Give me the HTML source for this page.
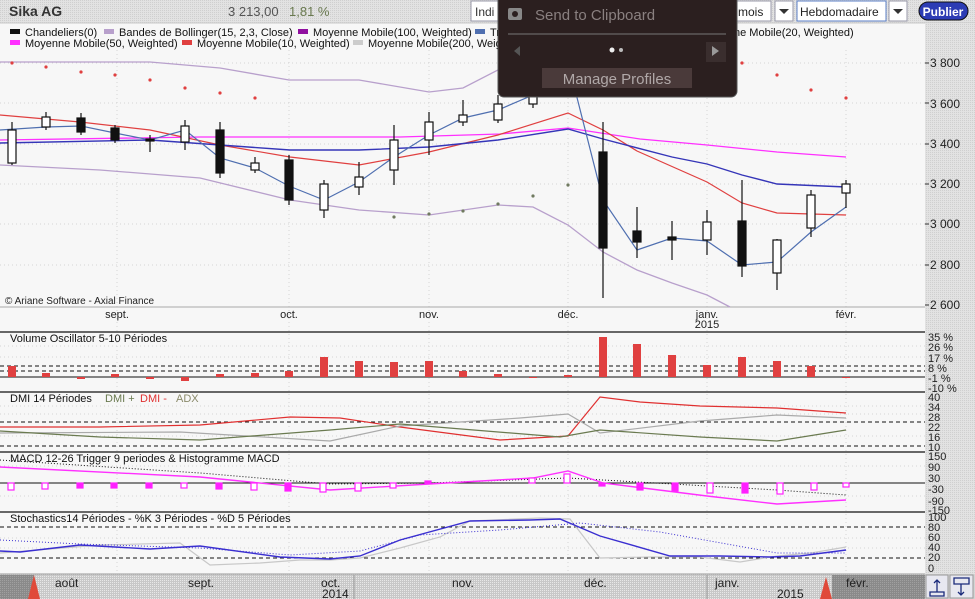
<!DOCTYPE html>
<html><head><meta charset="utf-8"><style>
html,body{margin:0;padding:0;background:#f4f4f4;width:975px;height:599px;overflow:hidden}
svg{display:block;font-family:"Liberation Sans",sans-serif}
</style></head><body>
<svg width="975" height="599" viewBox="0 0 975 599" xmlns="http://www.w3.org/2000/svg">
<defs>
<pattern id="tex" width="2" height="2" patternUnits="userSpaceOnUse"><rect width="2" height="2" fill="#e2e2e2"/><rect width="1" height="1" fill="#cfcfcf"/></pattern>
<pattern id="tex2" width="2" height="2" patternUnits="userSpaceOnUse"><rect width="2" height="2" fill="#c8c8c8"/><rect width="1" height="1" fill="#e8e8e8"/></pattern>
<pattern id="tex3" width="2" height="2" patternUnits="userSpaceOnUse"><rect width="2" height="2" fill="#8a8a8a"/><rect width="1" height="1" fill="#a0a0a0"/></pattern>
</defs>
<rect width="975" height="599" fill="#f7f7f7"/>
<rect x="0" y="0" width="975" height="23" fill="url(#tex)"/>
<line x1="0" y1="23" x2="975" y2="23" stroke="#c8c8c8"/>
<rect x="925" y="23" width="50" height="551" fill="url(#tex)"/>
<g stroke="#d4d4d4" stroke-dasharray="1,3">
<line x1="0" y1="63" x2="925" y2="63"/><line x1="0" y1="103" x2="925" y2="103"/><line x1="0" y1="144" x2="925" y2="144"/><line x1="0" y1="184" x2="925" y2="184"/><line x1="0" y1="224" x2="925" y2="224"/><line x1="0" y1="265" x2="925" y2="265"/>
<line x1="117" y1="50" x2="117" y2="574"/><line x1="289" y1="50" x2="289" y2="574"/><line x1="429" y1="50" x2="429" y2="574"/><line x1="568" y1="50" x2="568" y2="574"/><line x1="707" y1="50" x2="707" y2="574"/><line x1="846" y1="50" x2="846" y2="574"/>
<line x1="0" y1="346" x2="925" y2="346"/><line x1="0" y1="357" x2="925" y2="357"/><line x1="0" y1="406" x2="925" y2="406"/><line x1="0" y1="414" x2="925" y2="414"/><line x1="0" y1="436" x2="925" y2="436"/><line x1="0" y1="466" x2="925" y2="466"/><line x1="0" y1="496" x2="925" y2="496"/><line x1="0" y1="538" x2="925" y2="538"/><line x1="0" y1="548" x2="925" y2="548"/>
</g>
<line x1="0" y1="307" x2="925" y2="307" stroke="#aaa"/>

<text x="9" y="16" font-size="14" font-weight="bold" fill="#333">Sika AG</text>
<text x="228" y="16" font-size="13" fill="#555">3 213,00</text>
<text x="289" y="16" font-size="13" fill="#6a7a50">1,81 %</text>
<rect x="471" y="1" width="30" height="20" fill="#fff" stroke="#99a"/>
<text x="475" y="16" font-size="12" fill="#333">Indi</text>
<rect x="736" y="1" width="35" height="20" fill="#fff" stroke="#99a"/>
<text x="738" y="16" font-size="12" fill="#222">mois</text>
<rect x="775" y="1" width="18" height="20" fill="#fff" stroke="#99a"/><path d="M779 9h10l-5 5z" fill="#333"/>
<rect x="797" y="1" width="89" height="20" fill="#fff" stroke="#5b7fc7"/>
<text x="800" y="16" font-size="12" fill="#222">Hebdomadaire</text>
<rect x="889" y="1" width="18" height="20" fill="#fff" stroke="#99a"/><path d="M893 9h10l-5 5z" fill="#333"/>
<rect x="919" y="2" width="49" height="18" rx="9" fill="#2c3cb4" stroke="#111"/>
<text x="943" y="16" font-size="12" font-weight="bold" fill="#fff" text-anchor="middle">Publier</text>

<g font-size="11" fill="#111">
<rect x="10" y="29" width="10" height="5" fill="#111"/><text x="25" y="36">Chandeliers(0)</text>
<rect x="104" y="29" width="10" height="5" fill="#b8a0cc"/><text x="119" y="36">Bandes de Bollinger(15, 2,3, Close)</text>
<rect x="298" y="29" width="10" height="5" fill="#9010a0"/><text x="313" y="36">Moyenne Mobile(100, Weighted)</text>
<rect x="475" y="29" width="10" height="5" fill="#4f6fb0"/><text x="490" y="36">Tr</text>
<text x="734" y="36">ne Mobile(20, Weighted)</text>
<rect x="10" y="40" width="10" height="5" fill="#ff30ff"/><text x="25" y="47">Moyenne Mobile(50, Weighted)</text>
<rect x="182" y="40" width="10" height="5" fill="#e04040"/><text x="197" y="47">Moyenne Mobile(10, Weighted)</text>
<rect x="353" y="40" width="10" height="5" fill="#cccccc"/><text x="368" y="47">Moyenne Mobile(200, Weig</text>
</g>

<polyline fill="none" stroke="#b8a0cc" stroke-width="1.3" points="0,62 80,62 150,62 220,68 289,80 359,80 429,92 463,88 498,70 520,55"/>
<polyline fill="none" stroke="#b8a0cc" stroke-width="1.3" points="0,165 100,170 200,178 290,200 359,210 429,215 498,205 533,207 568,225 603,252 637,270 672,283 707,295 730,307"/>
<polyline fill="none" stroke="#ff30ff" stroke-width="1.3" points="0,140 200,137 400,137 500,134 568,128 640,139 707,145 777,152 846,157"/>
<polyline fill="none" stroke="#e04040" stroke-width="1.2" points="0,115 80,122 150,130 220,145 290,157 359,165 429,152 498,135 568,113 603,130 637,151 707,182 742,203 777,213 846,215"/>
<polyline fill="none" stroke="#3535b8" stroke-width="1.4" points="0,143 150,140 290,150 359,150 429,147 498,140 568,129 603,139 672,157 707,164 742,175 777,184 846,187"/>
<polyline fill="none" stroke="#4f6fb0" stroke-width="1.2" points="0,130 46,127 81,126 115,133 150,140 185,130 220,158 255,168 289,186 324,200 359,182 394,157 429,135 463,118 498,110 533,95 570,70 603,200 637,250 672,238 707,241 742,265 777,262 811,232 846,207"/>
<g fill="#e04040">
<circle cx="12" cy="63" r="1.6"/><circle cx="46" cy="67" r="1.6"/><circle cx="81" cy="72" r="1.6"/><circle cx="115" cy="75" r="1.6"/><circle cx="150" cy="80" r="1.6"/><circle cx="185" cy="88" r="1.6"/><circle cx="220" cy="93" r="1.6"/><circle cx="255" cy="98" r="1.6"/>
<circle cx="742" cy="63" r="1.6"/><circle cx="777" cy="75" r="1.6"/><circle cx="811" cy="90" r="1.6"/><circle cx="846" cy="98" r="1.6"/>
</g>
<g fill="#707a60"><circle cx="394" cy="217" r="1.6"/><circle cx="429" cy="214" r="1.6"/><circle cx="463" cy="211" r="1.6"/><circle cx="498" cy="204" r="1.6"/><circle cx="533" cy="196" r="1.6"/><circle cx="568" cy="185" r="1.6"/></g>

<g stroke="#111" stroke-width="1.2">
<line x1="12" y1="122" x2="12" y2="165"/><rect x="8" y="130" width="8" height="33" fill="#fff"/>
<line x1="46" y1="112" x2="46" y2="130"/><rect x="42" y="117" width="8" height="10" fill="#fff"/>
<line x1="81" y1="113" x2="81" y2="135"/><rect x="77" y="118" width="8" height="14" fill="#111"/>
<line x1="115" y1="125" x2="115" y2="143"/><rect x="111" y="128" width="8" height="12" fill="#111"/>
<line x1="150" y1="135" x2="150" y2="152"/><rect x="146" y="139" width="8" height="2" fill="#111"/>
<line x1="185" y1="120" x2="185" y2="150"/><rect x="181" y="126" width="8" height="16" fill="#fff"/>
<line x1="220" y1="122" x2="220" y2="178"/><rect x="216" y="130" width="8" height="43" fill="#111"/>
<line x1="255" y1="157" x2="255" y2="173"/><rect x="251" y="163" width="8" height="7" fill="#fff"/>
<line x1="289" y1="155" x2="289" y2="205"/><rect x="285" y="160" width="8" height="40" fill="#111"/>
<line x1="324" y1="180" x2="324" y2="218"/><rect x="320" y="184" width="8" height="26" fill="#fff"/>
<line x1="359" y1="162" x2="359" y2="195"/><rect x="355" y="177" width="8" height="10" fill="#fff"/>
<line x1="394" y1="125" x2="394" y2="185"/><rect x="390" y="140" width="8" height="30" fill="#fff"/>
<line x1="429" y1="112" x2="429" y2="155"/><rect x="425" y="122" width="8" height="18" fill="#fff"/>
<line x1="463" y1="100" x2="463" y2="126"/><rect x="459" y="115" width="8" height="7" fill="#fff"/>
<line x1="498" y1="95" x2="498" y2="123"/><rect x="494" y="104" width="8" height="16" fill="#fff"/>
<line x1="533" y1="85" x2="533" y2="108"/><rect x="529" y="95" width="8" height="9" fill="#fff"/>
<line x1="603" y1="122" x2="603" y2="298"/><rect x="599" y="152" width="8" height="96" fill="#111"/>
<line x1="637" y1="207" x2="637" y2="258"/><rect x="633" y="231" width="8" height="11" fill="#111"/>
<line x1="672" y1="221" x2="672" y2="260"/><rect x="668" y="237" width="8" height="3" fill="#111"/>
<line x1="707" y1="210" x2="707" y2="255"/><rect x="703" y="222" width="8" height="18" fill="#fff"/>
<line x1="742" y1="180" x2="742" y2="277"/><rect x="738" y="221" width="8" height="45" fill="#111"/>
<line x1="777" y1="239" x2="777" y2="290"/><rect x="773" y="240" width="8" height="33" fill="#fff"/>
<line x1="811" y1="190" x2="811" y2="237"/><rect x="807" y="195" width="8" height="33" fill="#fff"/>
<line x1="846" y1="180" x2="846" y2="208"/><rect x="842" y="184" width="8" height="9" fill="#fff"/>
</g>

<text x="5" y="304" font-size="10" fill="#222">© Ariane Software - Axial Finance</text>
<g font-size="11" fill="#222" text-anchor="middle">
<text x="117" y="318">sept.</text><text x="289" y="318">oct.</text><text x="429" y="318">nov.</text><text x="568" y="318">déc.</text><text x="707" y="318">janv.</text><text x="707" y="328">2015</text><text x="846" y="318">févr.</text>
</g>
<g font-size="12" fill="#222"><text x="930" y="67">3 800</text><text x="930" y="108">3 600</text><text x="930" y="148">3 400</text><text x="930" y="188">3 200</text><text x="930" y="228">3 000</text><text x="930" y="269">2 800</text><text x="930" y="309">2 600</text></g>
<g stroke="#333"><line x1="925" y1="63" x2="929" y2="63"/><line x1="925" y1="103" x2="929" y2="103"/><line x1="925" y1="144" x2="929" y2="144"/><line x1="925" y1="184" x2="929" y2="184"/><line x1="925" y1="224" x2="929" y2="224"/><line x1="925" y1="265" x2="929" y2="265"/><line x1="925" y1="305" x2="929" y2="305"/></g>

<g stroke="#111" stroke-width="1.3"><line x1="0" y1="332" x2="925" y2="332"/><line x1="0" y1="392" x2="925" y2="392"/><line x1="0" y1="452" x2="925" y2="452"/><line x1="0" y1="512" x2="925" y2="512"/></g>

<text x="10" y="342" font-size="11" fill="#111">Volume Oscillator 5-10 Périodes</text>
<g stroke="#111" stroke-dasharray="4,3"><line x1="0" y1="366" x2="925" y2="366"/><line x1="0" y1="371" x2="925" y2="371"/></g>
<line x1="0" y1="377" x2="925" y2="377" stroke="#111"/>
<g fill="#e04040">
<rect x="8" y="366" width="8" height="11"/><rect x="42" y="373" width="8" height="4"/><rect x="77" y="377" width="8" height="2"/><rect x="111" y="374" width="8" height="3"/><rect x="146" y="377" width="8" height="2"/><rect x="181" y="377" width="8" height="4"/><rect x="216" y="374" width="8" height="3"/><rect x="251" y="373" width="8" height="4"/><rect x="285" y="371" width="8" height="6"/><rect x="320" y="357" width="8" height="20"/><rect x="355" y="361" width="8" height="16"/><rect x="390" y="362" width="8" height="15"/><rect x="425" y="361" width="8" height="16"/><rect x="459" y="371" width="8" height="6"/><rect x="494" y="374" width="8" height="3"/><rect x="529" y="377" width="8" height="1"/><rect x="564" y="375" width="8" height="2"/><rect x="599" y="337" width="8" height="40"/><rect x="633" y="344" width="8" height="33"/><rect x="668" y="355" width="8" height="22"/><rect x="703" y="365" width="8" height="12"/><rect x="738" y="357" width="8" height="20"/><rect x="773" y="361" width="8" height="16"/><rect x="807" y="366" width="8" height="11"/><rect x="842" y="377" width="8" height="1"/>
</g>
<g font-size="11" fill="#222"><text x="928" y="341">35 %</text><text x="928" y="351">26 %</text><text x="928" y="362">17 %</text><text x="928" y="372">8 %</text><text x="928" y="382">-1 %</text><text x="928" y="392">-10 %</text></g>

<text x="10" y="402" font-size="11" fill="#111">DMI 14 Périodes</text>
<text x="105" y="402" font-size="11" fill="#6a7a50">DMI +</text>
<text x="140" y="402" font-size="11" fill="#e03030">DMI -</text>
<text x="176" y="402" font-size="11" fill="#8a8a6a">ADX</text>
<g stroke="#111" stroke-dasharray="4,3"><line x1="0" y1="422" x2="925" y2="422"/><line x1="0" y1="446" x2="925" y2="446"/></g>
<polyline fill="none" stroke="#e03030" stroke-width="1.2" points="0,427 100,427 200,425 290,417 340,418 400,427 500,440 568,436 600,397 640,402 700,406 777,408 846,413"/>
<polyline fill="none" stroke="#aaa" stroke-width="1.2" points="0,433 180,432 330,441 400,426 520,418 568,414 600,433 700,421 777,415 846,418"/>
<polyline fill="none" stroke="#6a7a50" stroke-width="1.2" points="0,431 100,437 200,440 330,430 400,424 560,437 600,430 700,437 777,441 846,430"/>
<g font-size="11" fill="#222"><text x="928" y="401">40</text><text x="928" y="411">34</text><text x="928" y="421">28</text><text x="928" y="431">22</text><text x="928" y="441">16</text><text x="928" y="451">10</text></g>

<text x="10" y="462" font-size="11" fill="#111">MACD 12-26   Trigger 9 periodes &amp; Histogramme MACD</text>
<line x1="0" y1="483" x2="925" y2="483" stroke="#111"/>
<polyline fill="none" stroke="#111" stroke-width="1" stroke-dasharray="1,2" points="0,460 200,473 330,484 429,483 568,478 603,480 777,490 846,495"/>
<polyline fill="none" stroke="#ff30ff" stroke-width="1.4" points="0,467 200,477 330,490 429,484 533,478 568,471 603,483 707,496 777,504 846,500"/>
<g stroke="#ff20ff" stroke-width="1.2">
<rect x="8" y="483" width="6" height="7" fill="#fff"/><rect x="42" y="483" width="6" height="6" fill="#fff"/><rect x="77" y="483" width="6" height="5" fill="#ff20ff"/><rect x="111" y="483" width="6" height="5" fill="#ff20ff"/><rect x="146" y="483" width="6" height="5" fill="#ff20ff"/><rect x="181" y="483" width="6" height="5" fill="#fff"/><rect x="216" y="483" width="6" height="6" fill="#ff20ff"/><rect x="251" y="483" width="6" height="7" fill="#fff"/><rect x="285" y="483" width="6" height="8" fill="#ff20ff"/><rect x="320" y="483" width="6" height="9" fill="#fff"/><rect x="355" y="483" width="6" height="8" fill="#fff"/><rect x="390" y="483" width="6" height="5" fill="#fff"/><rect x="425" y="481" width="6" height="2" fill="#ff20ff"/><rect x="529" y="478" width="6" height="5" fill="#fff"/><rect x="564" y="474" width="6" height="9" fill="#fff"/><rect x="599" y="483" width="6" height="3" fill="#ff20ff"/><rect x="637" y="483" width="6" height="7" fill="#ff20ff"/><rect x="672" y="483" width="6" height="8" fill="#ff20ff"/><rect x="707" y="483" width="6" height="10" fill="#fff"/><rect x="742" y="483" width="6" height="10" fill="#ff20ff"/><rect x="777" y="483" width="6" height="11" fill="#fff"/><rect x="811" y="483" width="6" height="7" fill="#fff"/><rect x="843" y="483" width="6" height="4" fill="#fff"/>
</g>
<g font-size="11" fill="#222"><text x="928" y="460">150</text><text x="928" y="471">90</text><text x="928" y="482">30</text><text x="928" y="493">-30</text><text x="928" y="505">-90</text><text x="928" y="514">-150</text></g>

<text x="10" y="522" font-size="11" fill="#111">Stochastics14 Périodes  -  %K 3 Périodes  -  %D 5 Périodes</text>
<g stroke="#111" stroke-dasharray="4,3"><line x1="0" y1="527" x2="925" y2="527"/><line x1="0" y1="558" x2="925" y2="558"/></g>
<polyline fill="none" stroke="#c8c8c8" stroke-width="1.2" points="0,553 100,545 180,543 210,565 260,563 300,560 330,560 360,558 400,548 440,537 470,521 540,518 570,519 600,558 650,557 700,557 740,562 777,556 811,553 846,547"/>
<polyline fill="none" stroke="#3a2fd0" stroke-width="1" stroke-dasharray="1,2" points="0,540 80,544 200,548 290,555 360,551 420,535 500,530 580,523 660,532 777,553 846,553"/>
<polyline fill="none" stroke="#3a2fd0" stroke-width="1.4" points="0,551 20,552 80,545 150,549 200,546 280,557 330,559 360,556 400,540 470,521 530,520 560,519 600,536 670,556 720,556 770,557 800,556 846,550"/>
<g font-size="11" fill="#222"><text x="928" y="521">100</text><text x="928" y="531">80</text><text x="928" y="541">60</text><text x="928" y="551">40</text><text x="928" y="561">20</text><text x="928" y="572">0</text></g>

<rect x="0" y="574" width="925" height="25" fill="url(#tex2)"/>
<line x1="0" y1="574" x2="925" y2="574" stroke="#999"/>
<rect x="0" y="575" width="34" height="24" fill="url(#tex3)"/>
<path d="M28 599 L34 575 L40 599Z" fill="#e04a3a"/>
<path d="M820 599 L826 577 L832 599Z" fill="#e04a3a"/>
<rect x="832" y="575" width="93" height="24" fill="url(#tex3)"/>
<line x1="354" y1="575" x2="354" y2="599" stroke="#999"/>
<line x1="707" y1="575" x2="707" y2="599" stroke="#999"/>
<g font-size="12" fill="#222"><text x="55" y="587">août</text><text x="188" y="587">sept.</text><text x="321" y="587">oct.</text><text x="322" y="598">2014</text><text x="452" y="587">nov.</text><text x="584" y="587">déc.</text><text x="715" y="587">janv.</text><text x="777" y="598">2015</text><text x="846" y="587">févr.</text></g>
<rect x="925" y="574" width="50" height="25" fill="#d4d4d4"/>
<rect x="926" y="575" width="22" height="23" fill="#e8e8f0" stroke="#999"/>
<rect x="950" y="575" width="23" height="23" fill="#e8e8f0" stroke="#999"/>
<path d="M930 592h14v4h-14z M937 580v12 M934 583l3-3 3 3" fill="none" stroke="#1a2a7a" stroke-width="1.3"/>
<path d="M954 578h15v6h-15z M961 584v11 M958 592l3 3 3-3" fill="none" stroke="#1a2a7a" stroke-width="1.3"/>

<rect x="498" y="-6" width="239" height="103" rx="6" fill="#2b1f1f" stroke="#555"/>
<rect x="508" y="8" width="14" height="12" rx="2" fill="#888"/><circle cx="515" cy="14" r="3" fill="#2b1f1f"/>
<text x="535" y="20" font-size="15" fill="#8a8080">Send to Clipboard</text>
<line x1="508" y1="34" x2="726" y2="34" stroke="#777"/>
<path d="M520 46 l-6 5 6 5z" fill="#555"/>
<rect x="706" y="42" width="20" height="20" fill="#3a2e2e"/><path d="M712 46 l7 5 -7 5z" fill="#999"/>
<circle cx="612" cy="50" r="2.5" fill="#eee"/><circle cx="621" cy="50" r="2" fill="#bbb"/>
<rect x="542" y="68" width="150" height="20" fill="#4a3a3a"/>
<text x="617" y="84" font-size="15" fill="#b0a8a8" text-anchor="middle">Manage Profiles</text>
</svg>
</body></html>
